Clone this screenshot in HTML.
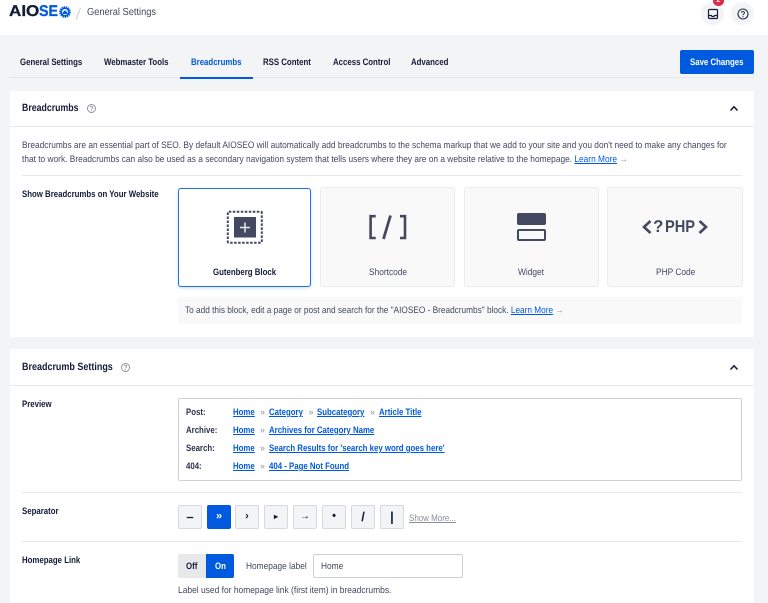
<!DOCTYPE html>
<html><head><meta charset="utf-8"><style>
html,body{margin:0;padding:0}
body{width:768px;height:603px;overflow:hidden;position:relative;background:#f3f4f5;font-family:"Liberation Sans",sans-serif;color:#434960;text-rendering:geometricPrecision}
.a{position:absolute}
.t{position:absolute;white-space:nowrap;font-size:9.4px;line-height:12px;color:#434960;transform:scaleX(.89);transform-origin:0 0}
.b,.w,.bl{font-weight:700;transform:scaleX(.835)}
.b{color:#141b38}
.h{font-size:10.500px;line-height:14px;transform:scaleX(.85)}
.l{color:#005ae0;text-decoration:underline}
.bl{color:#005ae0;text-decoration:underline}
.sep{position:absolute;color:#a9acb8;font-size:9px;font-weight:700;line-height:12px}
.card{position:absolute;background:#fff;border-radius:2px}
.opt{position:absolute;top:187px;height:100px;background:#f9f9f9;border:1px solid #ebecee;border-radius:3px;box-sizing:border-box}
.hr{position:absolute;height:1px;background:#e8e8eb}
.btn{position:absolute;top:505px;width:24px;height:24px;box-sizing:border-box;background:#f3f4f5;border:1px solid #d8d9de;border-radius:2px;text-align:center;font-size:11px;line-height:21px;font-weight:700;color:#141b38}
</style></head><body>
<div class="a" style="left:0;top:0;width:768px;height:35px;background:#fff"></div>
<div class="a" style="left:9px;top:0;font-size:15.500px;line-height:24px;font-weight:700;color:#141b38;-webkit-text-stroke:.3px #141b38;white-space:nowrap;transform:scaleX(1.1);transform-origin:0 0">AIO</div>
<div class="a" style="left:39px;top:0;font-size:15.500px;line-height:24px;font-weight:700;color:#005ae0;-webkit-text-stroke:.3px #005ae0;white-space:nowrap;transform:scaleX(.92);transform-origin:0 0">SE</div>
<svg class="a" style="left:58.500px;top:6px" width="12" height="12" viewBox="0 0 12 12"><circle cx="6" cy="6" r="5.200" fill="none" stroke="#005ae0" stroke-width="1.300" stroke-dasharray="1.400 .9"/><circle cx="6" cy="6" r="3.900" fill="none" stroke="#005ae0" stroke-width="1.800"/><path d="M3.800 6.300L6 4.200 8.200 6.300V8H3.800Z" fill="#005ae0"/></svg>
<svg class="a" style="left:75px;top:7px" width="7" height="13"><path d="M1 12.500L5.500 1" stroke="#c4c6ce" fill="none"/></svg>
<div class="t" style="left:86.500px;top:7px;font-size:10.200px;color:#434960;transform:scaleX(.91)">General Settings</div>

<div class="a" style="left:701px;top:2px;width:23px;height:23px;border-radius:50%;background:#f3f4f5"></div>
<svg class="a" style="left:707px;top:7.500px" width="12" height="12" viewBox="0 0 12 12"><rect x="1.500" y="1.500" width="9" height="9" rx="1" fill="none" stroke="#141b38" stroke-width="1.200"/><path d="M1.500 7.500H4.500L5 8.500H7L7.500 7.500H10.500" fill="none" stroke="#141b38" stroke-width="1.200"/></svg>
<div class="a" style="left:713px;top:-4.500px;width:10.500px;height:10.500px;border-radius:50%;background:#df2a4a"></div>
<div class="a" style="left:716.500px;top:-4px;font-size:7px;line-height:9px;color:#fff;font-weight:700">2</div>
<div class="a" style="left:731px;top:2px;width:23px;height:23px;border-radius:50%;background:#f3f4f5"></div>
<svg class="a" style="left:737px;top:8px" width="12" height="12" viewBox="0 0 12 12"><circle cx="6" cy="6" r="5" fill="none" stroke="#2c324c" stroke-width="1.100"/><path d="M4.500 4.900C4.500 3 7.500 3 7.500 4.800 7.500 5.900 6 5.900 6 7.200" fill="none" stroke="#2c324c"/><circle cx="6" cy="8.700" r=".6" fill="#2c324c"/></svg>

<div class="t b" style="left:19.500px;top:56px">General Settings</div>
<div class="t b" style="left:104px;top:56px">Webmaster Tools</div>
<div class="t w" style="left:191px;top:56px;color:#005ae0">Breadcrumbs</div>
<div class="t b" style="left:263px;top:56px">RSS Content</div>
<div class="t b" style="left:332.500px;top:56px">Access Control</div>
<div class="t b" style="left:411px;top:56px">Advanced</div>
<div class="hr" style="left:9px;top:77px;width:745px;background:#e8e8eb"></div>
<div class="a" style="left:180px;top:77px;width:73px;height:2px;background:#005ae0"></div>
<div class="a" style="left:680px;top:50px;width:74px;height:24px;background:#005ae0;border-radius:2px"></div>
<div class="t w" style="left:690px;top:56px;color:#fff">Save Changes</div>

<div class="card" style="left:10px;top:91px;width:744px;height:246px"></div>
<div class="t b h" style="left:21.500px;top:101px;transform:scaleX(.835)">Breadcrumbs</div>
<svg class="a" style="left:86px;top:103px" width="11" height="11" viewBox="0 0 11 11"><circle cx="5.500" cy="5.500" r="4" fill="none" stroke="#8c8f9a" stroke-width=".9"/><path d="M4.200 4.400C4.200 2.900 6.800 2.900 6.800 4.400 6.800 5.300 5.500 5.300 5.500 6.500" fill="none" stroke="#8c8f9a" stroke-width=".8"/><circle cx="5.500" cy="7.800" r=".5" fill="#8c8f9a"/></svg>
<svg class="a" style="left:729px;top:105px" width="10" height="7"><path d="M1.500 5.500L5 1.700 8.500 5.500" fill="none" stroke="#141b38" stroke-width="1.500"/></svg>
<div class="hr" style="left:10px;top:126px;width:744px"></div>
<div class="t" style="left:21.500px;top:139px">Breadcrumbs are an essential part of SEO. By default AIOSEO will automatically add breadcrumbs to the schema markup that we add to your site and you don't need to make any changes for</div>
<div class="t" style="left:21.500px;top:152.500px">that to work. Breadcrumbs can also be used as a secondary navigation system that tells users where they are on a website relative to the homepage. <span class="l">Learn More</span> <span style="color:#8c8f9a">→</span></div>
<div class="hr" style="left:22px;top:175px;width:720px"></div>
<div class="t b" style="left:21.500px;top:188px">Show Breadcrumbs on Your Website</div>

<div class="opt" style="left:178px;top:188px;width:133px;height:99px;background:#fff;border-color:#1f6fe8;box-shadow:0 1px 3px rgba(0,90,224,.2)"></div>
<svg class="a" style="left:226px;top:210px" width="38" height="35"><rect x="1.800" y="1.800" width="34" height="31" rx="1" fill="none" stroke="#3f4560" stroke-width="2" stroke-dasharray="2.500 1.500"/><rect x="8" y="7" width="22" height="20.500" fill="#434960"/><path d="M19 12.500V22.500M14 17.500H24" stroke="#e9e9ec" stroke-width="1.500"/></svg>
<div class="t b" style="left:213px;top:266px">Gutenberg Block</div>

<div class="opt" style="left:320px;width:135px"></div>
<svg class="a" style="left:368px;top:213px" width="40" height="28" viewBox="0 0 40 28"><path d="M7.700 3.200H2.600V25H7.700M32 3.200H37V25H32" fill="none" stroke="#434960" stroke-width="2.600"/><path d="M22.500 2.500L15.500 26" stroke="#434960" stroke-width="2.800" fill="none"/></svg>
<div class="t" style="left:368.500px;top:266px">Shortcode</div>

<div class="opt" style="left:464px;width:135px"></div>
<div class="a" style="left:517px;top:213px;width:29px;height:12px;background:#434960;border-radius:2px"></div>
<div class="a" style="left:517px;top:229px;width:29px;height:12px;box-sizing:border-box;border:2.500px solid #434960;border-radius:2px"></div>
<div class="t" style="left:518px;top:266px">Widget</div>

<div class="opt" style="left:607px;width:136px"></div>
<svg class="a" style="left:641px;top:218px" width="12" height="18"><path d="M9.500 3L3 9 9.500 15" fill="none" stroke="#434960" stroke-width="2.600"/></svg>
<div class="a" style="left:653px;top:218px;font-size:17px;line-height:18px;font-weight:700;color:#434960">?</div>
<div class="a" style="left:665px;top:218px;font-size:17px;line-height:18px;font-weight:700;color:#434960;white-space:nowrap;transform:scaleX(.86);transform-origin:0 0">PHP</div>
<svg class="a" style="left:697px;top:218px" width="12" height="18"><path d="M2.500 3L9 9 2.500 15" fill="none" stroke="#434960" stroke-width="2.600"/></svg>
<div class="t" style="left:655.500px;top:266px">PHP Code</div>

<div class="a" style="left:178px;top:297px;width:564px;height:27px;background:#f9f9f9;border-radius:2px"></div>
<div class="t" style="left:185px;top:304px;transform:scaleX(.881)">To add this block, edit a page or post and search for the "AIOSEO - Breadcrumbs" block. <span class="l">Learn More</span> <span style="color:#8c8f9a">→</span></div>

<div class="card" style="left:10px;top:349px;width:744px;height:254px"></div>
<div class="t b h" style="left:21.500px;top:360px;transform:scaleX(.855)">Breadcrumb Settings</div>
<svg class="a" style="left:120px;top:362px" width="11" height="11" viewBox="0 0 11 11"><circle cx="5.500" cy="5.500" r="4" fill="none" stroke="#8c8f9a" stroke-width=".9"/><path d="M4.200 4.400C4.200 2.900 6.800 2.900 6.800 4.400 6.800 5.300 5.500 5.300 5.500 6.500" fill="none" stroke="#8c8f9a" stroke-width=".8"/><circle cx="5.500" cy="7.800" r=".5" fill="#8c8f9a"/></svg>
<svg class="a" style="left:729px;top:364px" width="10" height="7"><path d="M1.500 5.500L5 1.700 8.500 5.500" fill="none" stroke="#141b38" stroke-width="1.500"/></svg>
<div class="hr" style="left:10px;top:385px;width:744px"></div>

<div class="t b" style="left:21.500px;top:398px">Preview</div>
<div class="a" style="left:178px;top:398px;width:564px;height:83px;box-sizing:border-box;border:1px solid #d0d1d7;border-radius:2px"></div>
<div class="t b" style="left:185.500px;top:406px;color:#2c324c">Post:</div>
<div class="t bl" style="left:233px;top:406px">Home</div><div class="sep" style="left:260px;top:406px">»</div>
<div class="t bl" style="left:269px;top:406px">Category</div><div class="sep" style="left:308.500px;top:406px">»</div>
<div class="t bl" style="left:317px;top:406px">Subcategory</div><div class="sep" style="left:370px;top:406px">»</div>
<div class="t bl" style="left:378.500px;top:406px">Article Title</div>
<div class="t b" style="left:185.500px;top:424px;color:#2c324c">Archive:</div>
<div class="t bl" style="left:233px;top:424px">Home</div><div class="sep" style="left:260px;top:424px">»</div>
<div class="t bl" style="left:269px;top:424px">Archives for Category Name</div>
<div class="t b" style="left:185.500px;top:442px;color:#2c324c">Search:</div>
<div class="t bl" style="left:233px;top:442px">Home</div><div class="sep" style="left:260px;top:442px">»</div>
<div class="t bl" style="left:269px;top:442px">Search Results for 'search key word goes here'</div>
<div class="t b" style="left:185.500px;top:460px;color:#2c324c">404:</div>
<div class="t bl" style="left:233px;top:460px">Home</div><div class="sep" style="left:260px;top:460px">»</div>
<div class="t bl" style="left:269px;top:460px">404 - Page Not Found</div>
<div class="hr" style="left:22px;top:492px;width:720px"></div>

<div class="t b" style="left:21.500px;top:505px">Separator</div>
<div class="btn" style="left:178px;font-size:13px">–</div>
<div class="btn" style="left:207px;background:#005ae0;border-color:#005ae0;color:#fff">»</div>
<div class="btn" style="left:235px">›</div>
<div class="btn" style="left:264px;font-size:8px">▸</div>
<div class="btn" style="left:293px;font-weight:400;font-size:10px;color:#141b38">→</div>
<div class="btn" style="left:322px">•</div>
<div class="btn" style="left:351px;font-size:13px">/</div>
<div class="btn" style="left:380px;font-size:13px">|</div>
<div class="t" style="left:408.500px;top:511.500px;color:#8c8f9a;text-decoration:underline;transform:scaleX(.85)">Show More...</div>
<div class="hr" style="left:22px;top:541px;width:720px"></div>

<div class="t b" style="left:21.500px;top:554px">Homepage Link</div>
<div class="a" style="left:178px;top:554px;width:29px;height:24px;background:#e8e8eb;border-radius:2px 0 0 2px"></div>
<div class="a" style="left:206px;top:554px;width:27.500px;height:24px;background:#005ae0;border-radius:0 2px 2px 0"></div>
<div class="t b" style="left:186px;top:560px">Off</div>
<div class="t w" style="left:215px;top:560px;color:#fff">On</div>
<div class="t" style="left:246px;top:560px">Homepage label</div>
<div class="a" style="left:313px;top:554px;width:150px;height:24px;box-sizing:border-box;border:1px solid #d0d1d7;border-radius:2px;background:#fff"></div>
<div class="t" style="left:320.500px;top:560px">Home</div>
<div class="t" style="left:178px;top:583.500px;transform:scaleX(.9)">Label used for homepage link (first item) in breadcrumbs.</div>
</body></html>
